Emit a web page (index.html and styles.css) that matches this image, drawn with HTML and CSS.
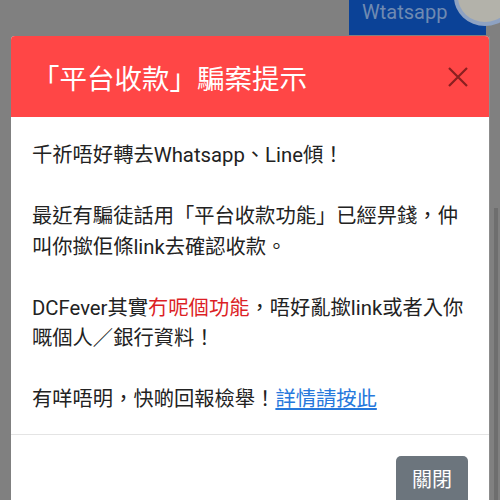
FILE: index.html
```html
<!DOCTYPE html>
<html lang="zh-Hant">
<head>
  <meta charset="UTF-8" />
  <meta name="viewport" content="width=device-width, initial-scale=1.0" />
  <title>騙案提示</title>
  <link rel="stylesheet" href="styles.css">
</head>
<body>
  <div class="topbar">
    <div class="wa-btn">Wtatsapp</div>
    <div class="avatar"></div>
  </div>

  <div class="stage">
    <div class="modal">
      <div class="modal-header">
        <h2 class="modal-title">「平台收款」騙案提示</h2>
        <svg class="close" width="22" height="22" viewBox="0 0 22 22">
          <path d="M2 2 L20 20 M20 2 L2 20" />
        </svg>
      </div>
      <div class="modal-body">
        <p>千祈唔好轉去Whatsapp、Line傾！</p>
        <p>最近有騙徒話用「平台收款功能」已經畀錢，仲叫你撳佢條link去確認收款。</p>
        <p>DCFever其實<span class="warn">冇呢個功能</span>，唔好亂撳link或者入你嘅個人／銀行資料！</p>
        <p>有咩唔明，快啲回報檢舉！<a href="#">詳情請按此</a></p>
      </div>
      <div class="modal-footer">
        <button>關閉</button>
      </div>
    </div>
    <div class="scrollbar"><div class="thumb"></div></div>
  </div>
</body>
</html>
```

FILE: styles.css
```css
body {
  margin: 0;
  height: 500px;
  overflow: hidden;
  background: #808080;
  font-family: Roboto, "Noto Sans CJK TC", sans-serif;
}
.topbar {
  position: relative;
  height: 36px;
  display: flex;
  justify-content: flex-end;
  padding-right: 14px;
}
.wa-btn {
  width: 137px;
  height: 35px;
  box-sizing: border-box;
  padding-left: 13px;
  background: #0b4297;
  color: #6f8ab2;
  font-size: 20px;
  line-height: 24px;
}
.avatar {
  position: absolute;
  right: -16px;
  top: -32px;
  width: 54px;
  height: 50px;
  border-radius: 50%;
  border: 4px solid #8ea2c2;
  background: #b3b2aa;
}
.stage {
  display: flex;
  padding-left: 11px;
}
.modal {
  width: 478px;
  background: #fff;
  border-radius: 4px 4px 0 0;
  overflow: hidden;
}
.modal-header {
  height: 81px;
  background: #ff4646;
  display: flex;
  align-items: center;
  justify-content: space-between;
  padding: 0 20px 0 21px;
}
.modal-title {
  margin: 0;
  font-size: 27.5px;
  font-weight: normal;
  color: #fff;
}
.close path {
  stroke: #8a2020;
  stroke-width: 2.2;
  fill: none;
}
.modal-body {
  padding: 23px 21px 19px;
  color: #222;
  font-size: 20.3px;
  line-height: 30.5px;
  border-bottom: 1px solid #e4e4e4;
}
.modal-body p {
  margin: 0 0 30.5px;
}
.modal-body p:last-child {
  margin-bottom: 0;
}
.warn {
  color: #dc1f26;
}
.modal-body a {
  color: #2678dc;
}
.modal-footer {
  display: flex;
  justify-content: flex-end;
  padding: 21px 21px 0;
}
.modal-footer button {
  font-family: inherit;
  font-size: 20px;
  line-height: 30px;
  padding: 9px 16px;
  background: #6c757d;
  color: #fff;
  border: none;
  border-radius: 5px;
}
.scrollbar {
  width: 11px;
  display: flex;
  flex-direction: column;
  padding-top: 172px;
  padding-left: 4px;
  box-sizing: border-box;
  border-left: 1px solid #8c8c8c;
}
.thumb {
  flex: 1;
  width: 4px;
  background: #6e6e6e;
}
```
